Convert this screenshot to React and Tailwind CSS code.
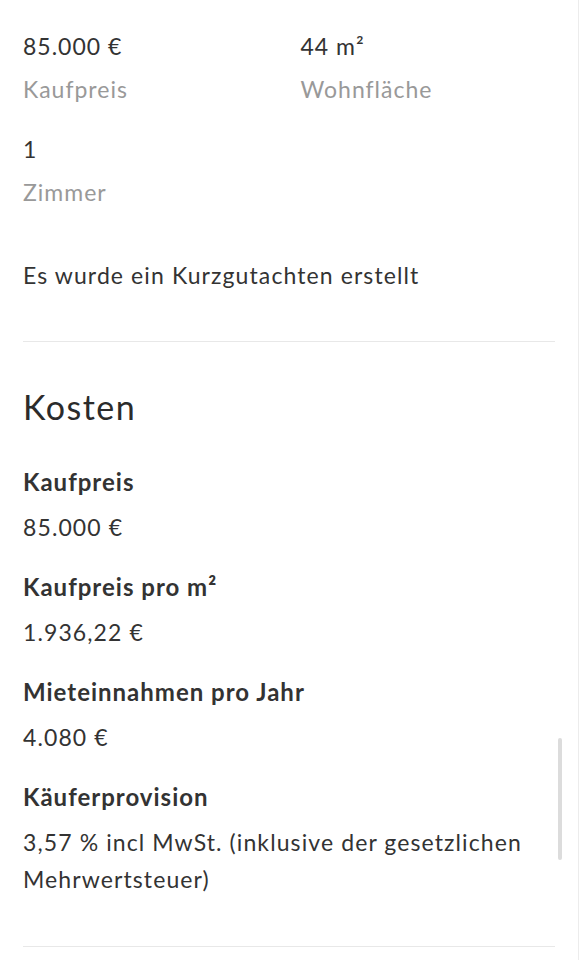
const font = { fontFamily: 'Lato, "Noto Sans", sans-serif' };

function Fact({ value, label }) {
  return (
    <div className="flex flex-col gap-[6px]">
      <div className="text-[23px] leading-[37px] tracking-[1px] text-[#333]">{value}</div>
      <div className="text-[23px] leading-[37px] tracking-[1px] text-[#999]">{label}</div>
    </div>
  );
}

function Cost({ label, children }) {
  return (
    <div className="flex flex-col gap-[9px]">
      <div className="text-[24px] leading-[37px] tracking-[1px] font-bold text-[#333]">{label}</div>
      <div className="text-[23px] leading-[37px] tracking-[1.1px] text-[#333]">{children}</div>
    </div>
  );
}

export default function App() {
  return (
    <div className="relative min-h-[960px] bg-white border-r border-[#ececec] overflow-hidden" style={font}>
      <div className="px-[23px] pt-[28px]">
        <div className="grid grid-cols-2 gap-x-[23px] gap-y-[23px]">
          <Fact value="85.000 €" label="Kaufpreis" />
          <Fact value="44 m²" label="Wohnfläche" />
          <Fact value="1" label="Zimmer" />
        </div>

        <p className="mt-[46px] text-[23px] leading-[37px] tracking-[1.1px] text-[#333]">Es wurde ein Kurzgutachten erstellt</p>

        <div className="mt-[47px] border-t border-[#e8e8e8]" />

        <h2 className="mt-[45px] text-[34px] leading-[40px] tracking-[1.5px] text-[#2b2b2b]">Kosten</h2>

        <div className="mt-[36px] flex flex-col gap-[22px]">
          <Cost label="Kaufpreis">85.000 €</Cost>
          <Cost label="Kaufpreis pro m²">1.936,22 €</Cost>
          <Cost label="Mieteinnahmen pro Jahr">4.080 €</Cost>
          <Cost label="Käuferprovision">3,57 % incl MwSt. (inklusive der gesetzlichen Mehrwertsteuer)</Cost>
        </div>

        <div className="mt-[48px] border-t border-[#e8e8e8]" />
      </div>

      <div className="absolute left-[558px] top-[738px] w-[4px] h-[122px] rounded-full bg-[#dcdcdc]" />
    </div>
  );
}
